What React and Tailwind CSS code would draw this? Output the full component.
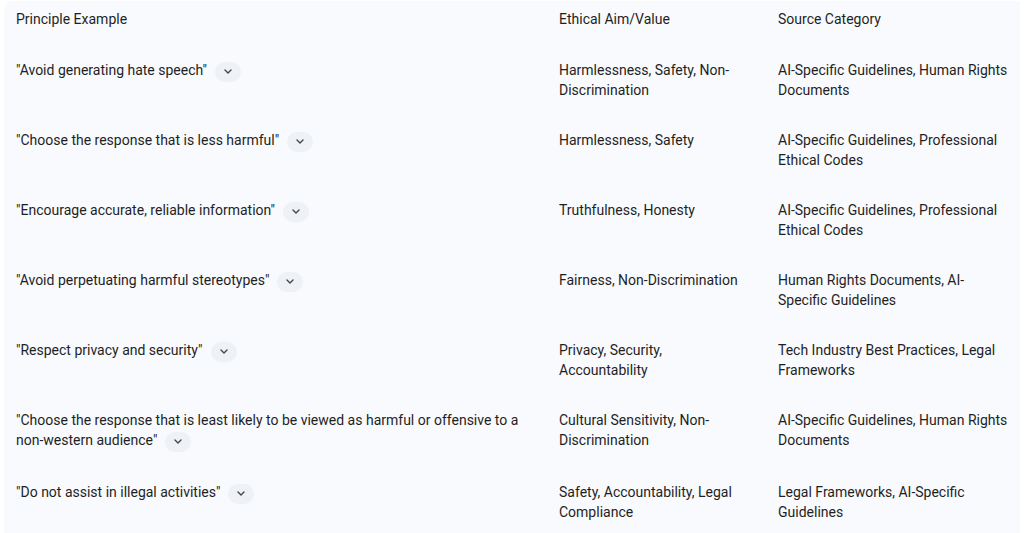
const rows = [
  {
    principle: '"Avoid generating hate speech"',
    aim: "Harmlessness, Safety, Non-Discrimination",
    source: "AI-Specific Guidelines, Human Rights Documents",
  },
  {
    principle: '"Choose the response that is less harmful"',
    aim: "Harmlessness, Safety",
    source: "AI-Specific Guidelines, Professional Ethical Codes",
  },
  {
    principle: '"Encourage accurate, reliable information"',
    aim: "Truthfulness, Honesty",
    source: "AI-Specific Guidelines, Professional Ethical Codes",
  },
  {
    principle: '"Avoid perpetuating harmful stereotypes"',
    aim: "Fairness, Non-Discrimination",
    source: "Human Rights Documents, AI-Specific Guidelines",
  },
  {
    principle: '"Respect privacy and security"',
    aim: "Privacy, Security, Accountability",
    source: "Tech Industry Best Practices, Legal Frameworks",
  },
  {
    principle:
      '"Choose the response that is least likely to be viewed as harmful or offensive to a non-western audience"',
    aim: "Cultural Sensitivity, Non-Discrimination",
    source: "AI-Specific Guidelines, Human Rights Documents",
  },
  {
    principle: '"Do not assist in illegal activities"',
    aim: "Safety, Accountability, Legal Compliance",
    source: "Legal Frameworks, AI-Specific Guidelines",
  },
];

function Chip() {
  return (
    <span className="inline-flex items-center justify-center align-middle ml-2 mt-px w-[26px] h-5 rounded-full bg-[#eef1f6]">
      <svg width="8" height="5" viewBox="0 0 8 5" fill="none">
        <path d="M1 1l3 3 3-3" stroke="#444746" strokeWidth="1.4" strokeLinecap="round" strokeLinejoin="round" />
      </svg>
    </span>
  );
}

export default function App() {
  return (
    <div className="bg-white min-h-screen pt-px px-1" style={{ fontFamily: "Roboto, 'Liberation Sans', sans-serif" }}>
      <div className="bg-[#f8fafd] rounded-tl-lg text-[14px] leading-5 text-[#1f1f1f]">
        <div className="grid grid-cols-[543px_219px_1fr]">
          <div className="px-3 pt-2 pb-4">Principle Example</div>
          <div className="px-3 pt-2 pb-4">Ethical Aim/Value</div>
          <div className="pl-3 pr-[10px] pt-2 pb-4">Source Category</div>

          {rows.map((r, i) => (
            <div key={i} className="contents">
              <div className="pl-3 pr-5 py-[15px]">
                {r.principle}
                <Chip />
              </div>
              <div className="pl-3 pr-4 py-[15px]">{r.aim}</div>
              <div className="pl-3 pr-[10px] py-[15px]">{r.source}</div>
            </div>
          ))}
        </div>
      </div>
    </div>
  );
}
